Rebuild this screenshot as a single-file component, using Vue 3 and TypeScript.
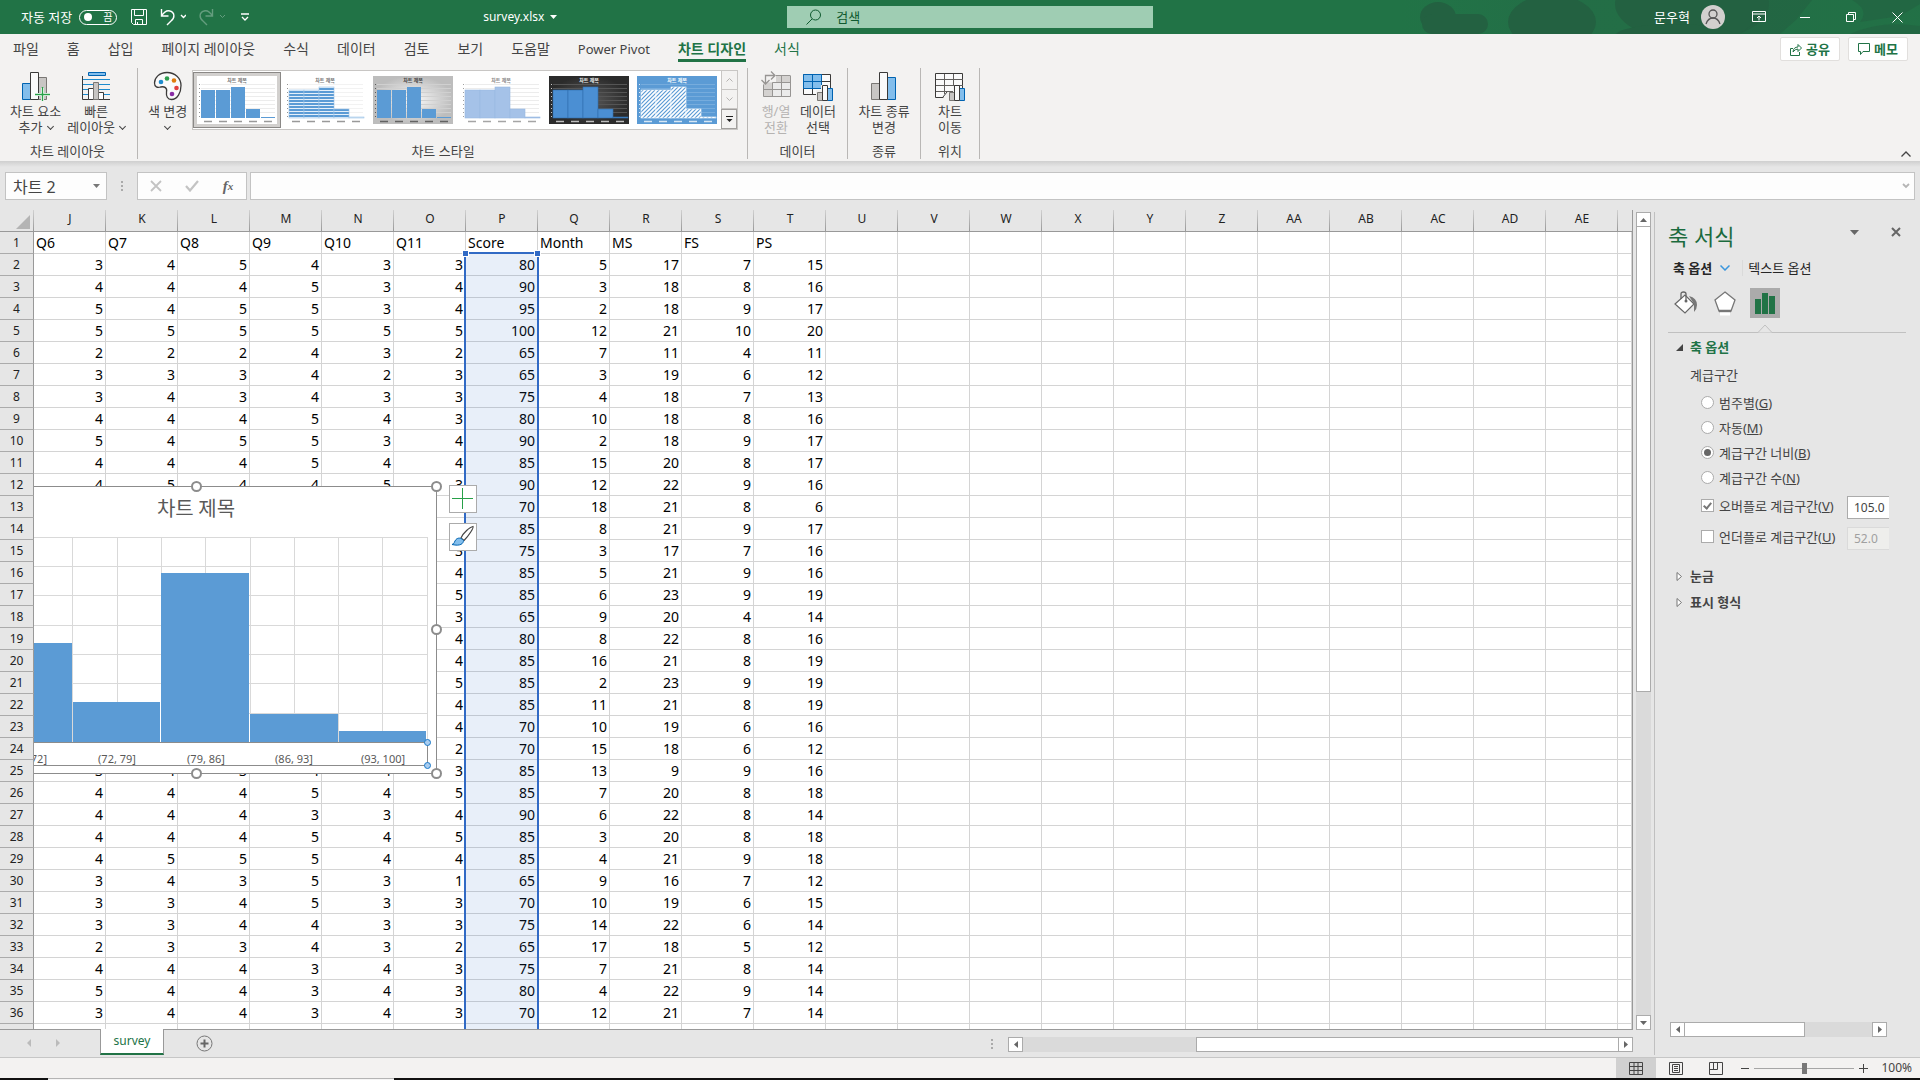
<script setup lang="ts">
import { ref } from 'vue'

interface Thumb {
  id: string
  back: string
  bar: string
  line: string
  ink: string
  grid: string
  joined: boolean
}

const menuTabs: string[] = ['파일', '홈', '삽입', '페이지 레이아웃', '수식', '데이터', '검토', '보기', '도움말', 'Power Pivot', '차트 디자인', '서식']
const activeTab = ref('차트 디자인')

const thumbs: Thumb[] = [
  { id: 'plain', back: '#ffffff', bar: '#5b9bd5', line: 'none', ink: '#777777', grid: '#ececec', joined: false },
  { id: 'stripe', back: '#ffffff', bar: 'url(#fill-stripe)', line: '#9cc3e6', ink: '#777777', grid: '#f2f2f2', joined: true },
  { id: 'silver', back: 'url(#back-silver)', bar: '#5b9bd5', line: 'none', ink: '#444444', grid: '#d0d0d0', joined: false },
  { id: 'pale', back: '#ffffff', bar: '#a5c2e8', line: '#98b8e2', ink: '#888888', grid: '#ececec', joined: true },
  { id: 'dark', back: 'url(#back-dark)', bar: '#4b8fd3', line: '#2f6fae', ink: '#eeeeee', grid: '#555555', joined: true },
  { id: 'hatch', back: '#5b9bd5', bar: 'url(#fill-hatch)', line: '#ffffff', ink: '#ffffff', grid: '#76acdd', joined: true },
]
const thumbTops: number[] = [14, 14, 11, 33, 41]

const columns: string[] = ['J', 'K', 'L', 'M', 'N', 'O', 'P', 'Q', 'R', 'S', 'T', 'U', 'V', 'W', 'X', 'Y', 'Z', 'AA', 'AB', 'AC', 'AD', 'AE']
const headings: string[] = ['Q6', 'Q7', 'Q8', 'Q9', 'Q10', 'Q11', 'Score', 'Month', 'MS', 'FS', 'PS']

const records: string[] = [
  '3 4 5 4 3 3 80 5 17 7 15',
  '4 4 4 5 3 4 90 3 18 8 16',
  '5 4 5 5 3 4 95 2 18 9 17',
  '5 5 5 5 5 5 100 12 21 10 20',
  '2 2 2 4 3 2 65 7 11 4 11',
  '3 3 3 4 2 3 65 3 19 6 12',
  '3 4 3 4 3 3 75 4 18 7 13',
  '4 4 4 5 4 3 80 10 18 8 16',
  '5 4 5 5 3 4 90 2 18 9 17',
  '4 4 4 5 4 4 85 15 20 8 17',
  '4 5 4 4 5 3 90 12 22 9 16',
  '- - - - - - 70 18 21 8 6',
  '- - - - - - 85 8 21 9 17',
  '- - - - - 3 75 3 17 7 16',
  '- - - - - 4 85 5 21 9 16',
  '- - - - - 5 85 6 23 9 19',
  '- - - - - 3 65 9 20 4 14',
  '- - - - - 4 80 8 22 8 16',
  '- - - - - 4 85 16 21 8 19',
  '- - - - - 5 85 2 23 9 19',
  '- - - - - 4 85 11 21 8 19',
  '- - - - - 4 70 10 19 6 16',
  '- - - - - 2 70 15 18 6 12',
  '3 4 3 4 4 3 85 13 9 9 16',
  '4 4 4 5 4 5 85 7 20 8 18',
  '4 4 4 3 3 4 90 6 22 8 14',
  '4 4 4 5 4 5 85 3 20 8 18',
  '4 5 5 5 4 4 85 4 21 9 18',
  '3 4 3 5 3 1 65 9 16 7 12',
  '3 3 4 5 3 3 70 10 19 6 15',
  '3 3 4 4 3 3 75 14 22 6 14',
  '2 3 3 4 3 2 65 17 18 5 12',
  '4 4 4 3 4 3 75 7 21 8 14',
  '5 4 4 3 4 3 80 4 22 9 14',
  '3 4 4 3 4 3 70 12 21 7 14',
]

const rows: string[][] = [
  headings,
  ...records.map((r) => r.split(' ').map((v) => (v === '-' ? '' : v))),
  [],
].map((r) => columns.map((_, i) => r[i] ?? ''))

const chartBars = [
  { x: 0, w: 72, top: 643 },
  { x: 73, w: 87, top: 702 },
  { x: 161, w: 88, top: 573 },
  { x: 250, w: 88, top: 714 },
  { x: 339, w: 87, top: 731 },
]
const chartCols = [72, 117, 161, 205, 250, 294, 338, 382, 427]
const chartLines = [537, 566, 595, 625, 654, 683, 713]
const chartLabels = [
  { x: 117, t: '(72, 79]' },
  { x: 206, t: '(79, 86]' },
  { x: 294, t: '(86, 93]' },
  { x: 383, t: '(93, 100]' },
]
const chartHandles = [[196, 486], [436, 486], [436, 629], [436, 773], [196, 773]]

const binModes = [
  { id: 'category', text: '범주별', key: 'G' },
  { id: 'auto', text: '자동', key: 'M' },
  { id: 'width', text: '계급구간 너비', key: 'B' },
  { id: 'count', text: '계급구간 수', key: 'N' },
]
const binMode = ref('width')
const overflowOn = ref(true)
const underflowOn = ref(false)
const overflowBin = ref('105.0')
const underflowBin = ref('52.0')
const cellName = ref('차트 2')
const formula = ref('')
const query = ref('')
</script>

<template>
  <div class="app">
    <header class="titlebar">
      <svg class="pattern" width="520" height="34" viewBox="0 0 520 34" aria-hidden="true">
        <defs><linearGradient id="haze"><stop offset="0" stop-color="#24704a" stop-opacity="0" /><stop offset=".3" stop-color="#246b46" stop-opacity=".7" /><stop offset="1" stop-color="#246b46" stop-opacity=".3" /></linearGradient></defs>
        <rect x="0" width="520" height="34" fill="url(#haze)" />
        <g fill="#236141">
          <ellipse cx="38" cy="17" rx="18" ry="15" />
          <rect x="22" y="14" width="66" height="20" rx="10" />
          <ellipse cx="152" cy="22" rx="44" ry="27" />
          <ellipse cx="292" cy="4" rx="77" ry="38" />
          <ellipse cx="275" cy="36" rx="60" ry="12" />
          <path d="M366 0H412L396 20L380 34H340L366 14ZM450 34Q480 20 520 26V34ZM452 0Q470 10 460 22L500 16L520 4V0Z" opacity=".6" />
        </g>
      </svg>
      <div class="title-left">
        <label class="autosave">자동 저장
          <button class="toggle" type="button" aria-label="자동 저장"><i></i>끔</button>
        </label>
        <button class="tool save" type="button" aria-label="저장">
          <svg width="16" height="16" viewBox="0 0 16 16"><path d="M.5.5h15v15h-13l-2-2zM3.5.5v6h9v-6M4.500 15.500v-5h7v5M6.500 13v2.500" /></svg>
        </button>
        <button class="tool undo" type="button" aria-label="실행 취소">
          <svg width="26" height="18" viewBox="0 0 26 18"><path d="M1.500 1v7h7M1.500 8C4 4 7 2 10 3c5 1.500 5 7 1 10l-4 4" stroke-width="1.400" /><path d="M21 7l2.500 2.500L26 7" stroke-width="1.400" /></svg>
        </button>
        <button class="tool redo" type="button" aria-label="다시 실행">
          <svg width="28" height="18" viewBox="0 0 28 18"><path d="M13.500 1v7h-7M13.500 8C11 4 8 2 5 3c-5 1.500-5 7-1 10l4 4" stroke-width="1.400" /><path d="M21 7l2.500 2.500L26 7" /></svg>
        </button>
        <button class="tool custom" type="button" aria-label="사용자 지정">
          <svg width="8" height="8" viewBox="0 0 8 8"><path d="M0 1h8M1 4l3 3 3-3" stroke-width="1.300" /></svg>
        </button>
        <button class="filename" type="button">survey.xlsx<svg width="7" height="4" viewBox="0 0 7 4"><path d="M0 0h7L3.500 4z" fill="#fff" stroke="none" /></svg></button>
      </div>
      <label class="search">
        <svg width="16" height="16" viewBox="0 0 16 16"><circle cx="9.500" cy="6" r="5" /><path d="M6 10L.5 15.500" /></svg>
        <input v-model="query" type="text" placeholder="검색" aria-label="검색" />
      </label>
      <div class="title-right">
        <span class="user">문우혁</span>
        <svg class="avatar" width="24" height="24" viewBox="0 0 24 24"><circle cx="12" cy="12" r="12" fill="#d2d0ce" /><circle cx="12" cy="9" r="4" fill="none" stroke="#555" stroke-width="1.300" /><path d="M5 19q2-6 7-6t7 6" fill="none" stroke="#555" stroke-width="1.300" /></svg>
        <button class="win" type="button" aria-label="리본 표시 옵션"><svg width="14" height="12" viewBox="0 0 14 12"><path d="M.5.5h13v10H.5zM.5 3h13M7 9.500V5M5 7l2-2 2 2" /></svg></button>
        <button class="win" type="button" aria-label="최소화"><svg width="10" height="12" viewBox="0 0 10 12"><path d="M0 6.500h10" /></svg></button>
        <button class="win" type="button" aria-label="이전 크기로"><svg width="10" height="10" viewBox="0 0 10 10"><path d="M.5 2.500h7v7h-7zM2.500 2.500v-2h7v7h-2" /></svg></button>
        <button class="win" type="button" aria-label="닫기"><svg width="11" height="11" viewBox="0 0 11 11"><path d="M.5.5l10 10M10.500.5l-10 10" /></svg></button>
      </div>
    </header>

    <section class="ribbon">
      <div class="tabrow">
        <nav class="tabs">
          <button v-for="t in menuTabs" :key="t" type="button" :class="{ latin: t === 'Power Pivot', active: t === activeTab, context: t === '서식' }" @click="activeTab = t">{{ t }}</button>
        </nav>
        <button class="share" type="button"><svg width="12" height="13" viewBox="0 0 12 13"><path d="M3 5.500H.5v7h9V9M3 9q.5-5 5-5V1.500L11.500 5 8 8.500V6Q5 6 3 9z" /></svg>공유</button>
        <button class="share" type="button"><svg width="12" height="12" viewBox="0 0 12 12"><path d="M.5.5h11v8H5l-2.500 3v-3h-2z" /></svg>메모</button>
      </div>

      <div class="groups">
        <div class="group g-layout">
          <div class="items">
            <button class="item" type="button">
              <svg width="30" height="30" viewBox="0 0 30 30"><path d="M1.500 12.500h8v16h-8z" fill="#83beec" stroke="#0063b1" /><path d="M17.500 6.500h8v22h-8z" fill="#c8c6c4" stroke="#797774" /><path d="M9.500 1.500h8v27h-8z" fill="#fafafa" stroke="#3b3a39" /><path d="M21.500 17v13M15 23.500h14" stroke="#fff" stroke-width="3" /><path d="M21.500 16v14M14 23.500h15" stroke="#27a048" stroke-width="1.400" /></svg>
              <span>차트 요소</span><span>추가 <b class="chev"></b></span>
            </button>
            <button class="item" type="button">
              <svg width="30" height="30" viewBox="0 0 30 30"><path d="M7.500 1.500h17v3h-17z" fill="#83beec" stroke="#0063b1" /><path d="M2 8.500h27M2 13.500h27M2 18.500h27M2 23.500h27" stroke="#1e8bcd" /><path d="M1.500 5v23.500H29" fill="none" stroke="#3b3a39" /><path d="M7.500 17.500h5v11h-5zM17.500 21.500h5v7h-5z" fill="#fff" stroke="#3b3a39" /><path d="M12.500 11.500h5v17h-5z" fill="#c8c6c4" stroke="#797774" /></svg>
              <span>빠른</span><span>레이아웃 <b class="chev"></b></span>
            </button>
          </div>
          <h3>차트 레이아웃</h3>
        </div>

        <div class="group g-style">
          <div class="items">
            <button class="item" type="button">
              <svg width="30" height="30" viewBox="0 0 30 30"><path d="M14 1.500C6 1.500 1.500 7 1.500 12c0 4 3 5 6 4 4-1 7 1 6 5-.5 4 1 7.500 5 7.500 6 0 9.500-7 9.500-14C28 7 22 1.500 14 1.500z" fill="#fafafa" stroke="#3b3a39" stroke-width="1.300" /><circle cx="8" cy="11" r="2.300" fill="#1e8bcd" /><circle cx="14" cy="7.500" r="2.300" fill="#2e9e4f" /><circle cx="21" cy="9.500" r="2.300" fill="#e07b0c" /><circle cx="23.500" cy="17" r="2.300" fill="#e23e3e" /><circle cx="19" cy="23" r="2.300" fill="#8a2da5" /></svg>
              <span>색 변경</span><span><b class="chev"></b></span>
            </button>
            <div class="gallery">
              <button v-for="t in thumbs" :key="t.id" type="button" class="thumb" :class="{ chosen: t.id === 'plain' }" :aria-label="'차트 스타일 ' + t.id">
                <svg width="80" height="48" viewBox="0 0 80 48">
                  <defs>
                    <pattern v-if="t.id === 'stripe'" id="fill-stripe" width="4" height="3" patternUnits="userSpaceOnUse"><rect width="4" height="3" fill="#e6f0fa" /><rect width="4" height="2" fill="#5b9bd5" /></pattern>
                    <pattern v-if="t.id === 'hatch'" id="fill-hatch" width="4" height="4" patternUnits="userSpaceOnUse"><rect width="4" height="4" fill="#fff" /><path d="M-1 5L5-1M-1 1L1-1M3 5L5 3" stroke="#5b9bd5" stroke-width="1.200" /></pattern>
                    <radialGradient v-if="t.id === 'silver'" id="back-silver"><stop offset="0" stop-color="#fafafa" /><stop offset="1" stop-color="#bdbdbd" /></radialGradient>
                    <radialGradient v-if="t.id === 'dark'" id="back-dark"><stop offset="0" stop-color="#5a5a5a" /><stop offset="1" stop-color="#2b2b2b" /></radialGradient>
                  </defs>
                  <rect width="80" height="48" :fill="t.back" />
                  <path v-for="y in [8, 12, 16, 20, 24, 28, 32, 36]" :key="y" :d="`M4 ${y}.5H78`" :stroke="t.grid" />
                  <path d="M2.500 8V42" :stroke="t.ink" stroke-dasharray="1 3" opacity=".8" />
                  <rect v-for="(y, i) in thumbTops" :key="i" :x="4 + i * 15" :y="y" :width="t.joined ? 15 : 14" :height="42 - y" :fill="t.bar" :stroke="t.line" stroke-width=".6" />
                  <path d="M7 45.500H78" :stroke="t.ink" stroke-width="1.500" stroke-dasharray="8 7" opacity=".75" />
                  <text x="40" y="6" text-anchor="middle" :fill="t.ink" font-size="5" font-weight="700">차트 제목</text>
                </svg>
              </button>
              <div class="gallery-scroll">
                <button type="button" aria-label="위로"><svg width="7" height="4" viewBox="0 0 7 4"><path d="M.5 3.500l3-3 3 3" stroke="#b5b3b1" fill="none" /></svg></button>
                <button type="button" aria-label="아래로"><svg width="7" height="4" viewBox="0 0 7 4"><path d="M.5.5l3 3 3-3" stroke="#b5b3b1" fill="none" /></svg></button>
                <button type="button" class="more" aria-label="자세히"><svg width="7" height="7" viewBox="0 0 7 7"><path d="M0 .5h7" stroke="#222" /><path d="M.5 3h6l-3 3z" fill="#222" /></svg></button>
              </div>
            </div>
          </div>
          <h3>차트 스타일</h3>
        </div>

        <div class="group g-data">
          <div class="items">
            <button class="item" type="button" disabled>
              <svg width="30" height="30" viewBox="0 0 30 30"><path d="M2.500 4.500h27v21h-27z" fill="#ebebeb" /><path d="M2.500 11.500h9v14h-9zM11.500 4.500h18v7h-18z" fill="#d4d2d0" /><path d="M29.500 4.500v21h-27v-12M20.500 4.500v21M11.500 11.500v14M11.500 11.500h18M2.500 18.500h27M15 4.500h14" fill="none" stroke="#979593" /><path d="M0 0h15v11H0z" fill="#f3f2f1" /><path d="M4.500 13V4.500H14M10 .5l4 4-4 4M.5 9l4 4 4-4" fill="none" stroke="#979593" stroke-width="1.300" /></svg>
              <span>행/열</span><span>전환</span>
            </button>
            <button class="item" type="button">
              <svg width="30" height="30" viewBox="0 0 30 30"><path d="M.5 3.500h27v20H.5z" fill="#fafafa" stroke="#3b3a39" /><path d="M.5 3.500h18v14H.5z" fill="#83beec" stroke="#0063b1" /><path d="M9.500 4v13M1 10.500h18" stroke="#0063b1" /><path d="M9.500 18v6M18.500 10.500h9M19 17.500h9" stroke="#3b3a39" /><path d="M13 19h5v-5h6v4h5v12H13z" fill="#f3f2f1" /><path d="M14.500 21.500h5v8h-5z" fill="#c8c6c4" stroke="#797774" /><path d="M24.500 17.500h5v12h-5z" fill="#83beec" stroke="#0063b1" /><path d="M19.500 14.500h5v15h-5z" fill="#fafafa" stroke="#3b3a39" /></svg>
              <span>데이터</span><span>선택</span>
            </button>
          </div>
          <h3>데이터</h3>
        </div>

        <div class="group g-type">
          <div class="items">
            <button class="item" type="button">
              <svg width="30" height="30" viewBox="0 0 30 30"><path d="M2.500 12.500h8v16h-8z" fill="#c8c6c4" stroke="#797774" /><path d="M18.500 6.500h8v22h-8z" fill="#83beec" stroke="#0063b1" /><path d="M10.500 1.500h8v27h-8z" fill="#fafafa" stroke="#3b3a39" /></svg>
              <span>차트 종류</span><span>변경</span>
            </button>
          </div>
          <h3>종류</h3>
        </div>

        <div class="group g-place">
          <div class="items">
            <button class="item" type="button">
              <svg width="30" height="30" viewBox="0 0 30 30"><path d="M.5 2.500h27v18l-14 6H.5z" fill="#fafafa" stroke="#3b3a39" /><path d="M9.500 3v20M18.500 3v15M1 8.500h27M1 14.500h27M1 20.500h20" stroke="#605e5c" /><path d="M8 27l5-6h5v-6h6v3h6v12H12z" fill="#f3f2f1" /><path d="M8 26l4-5" stroke="#3b3a39" /><path d="M14.500 21.500h5v8h-5z" fill="#c8c6c4" stroke="#797774" /><path d="M24.500 17.500h5v12h-5z" fill="#83beec" stroke="#0063b1" /><path d="M19.500 14.500h5v15h-5z" fill="#fafafa" stroke="#3b3a39" /></svg>
              <span>차트</span><span>이동</span>
            </button>
          </div>
          <h3>위치</h3>
        </div>
        <button class="collapse" type="button" aria-label="리본 축소"><svg width="10" height="6" viewBox="0 0 10 6"><path d="M.5 5.500l4.500-4.500 4.500 4.500" fill="none" stroke="#444" stroke-width="1.300" /></svg></button>
      </div>
    </section>

    <section class="formula-bar">
      <div class="namebox">
        <input v-model="cellName" type="text" aria-label="이름 상자" />
        <button type="button" aria-label="이름 목록"><svg width="7" height="4" viewBox="0 0 7 4"><path d="M0 0h7L3.500 4z" fill="#777" /></svg></button>
      </div>
      <i class="dots"></i>
      <div class="fx">
        <button type="button" aria-label="취소"><svg width="12" height="12" viewBox="0 0 12 12"><path d="M1 1l10 10M11 1L1 11" stroke="#c3c3c3" stroke-width="1.800" /></svg></button>
        <button type="button" aria-label="입력"><svg width="14" height="12" viewBox="0 0 14 12"><path d="M1 6l4 4.500L13 1" fill="none" stroke="#c3c3c3" stroke-width="2.200" /></svg></button>
        <button type="button" class="fn" aria-label="함수 삽입">f<sub>x</sub></button>
      </div>
      <div class="formula">
        <input v-model="formula" type="text" aria-label="수식 입력줄" />
        <svg width="8" height="6" viewBox="0 0 8 6"><path d="M1 1l3 3 3-3" fill="none" stroke="#b5b5b5" stroke-width="1.800" /></svg>
      </div>
    </section>

    <main class="work">
      <div class="sheet-side">
        <div class="sheet-row">
          <div class="sheet">
            <table>
              <colgroup><col class="c-head" /><col v-for="c in columns" :key="c" class="c-data" /><col /></colgroup>
              <thead>
                <tr><th class="corner"><svg width="14" height="14" viewBox="0 0 14 14"><path d="M14 0v14H0z" fill="#b4b4b4" /></svg></th><th v-for="c in columns" :key="c">{{ c }}</th><th class="rest"></th></tr>
              </thead>
              <tbody>
                <tr v-for="(r, i) in rows" :key="i" :class="{ names: i === 0 }">
                  <th>{{ i < 36 ? i + 1 : '' }}</th>
                  <td v-for="(v, j) in r" :key="j">{{ v }}</td>
                  <td></td>
                </tr>
              </tbody>
            </table>
            <div class="range"><i></i><i></i></div>
            <div class="chart">
              <svg width="412" height="300" viewBox="34 480 412 300">
                <rect x="20" y="486.500" width="416.500" height="287" fill="#fff" stroke="#8c8c8c" />
                <g stroke="#d9d9d9">
                  <path v-for="x in chartCols" :key="x" :d="`M${x}.5 537V742`" />
                  <path v-for="y in chartLines" :key="y" :d="`M34 ${y}.5H428`" />
                </g>
                <g fill="#5b9bd5"><rect v-for="b in chartBars" :key="b.x" :x="b.x" :y="b.top" :width="b.w" :height="742 - b.top" /></g>
                <path d="M160.500 702v40M249.500 714v28" stroke="#fff" />
                <path d="M34 742.500H427.500V765.500H34" fill="none" stroke="#8c8c8c" />
                <text x="196" y="516" text-anchor="middle" class="chart-title">차트 제목</text>
                <text x="47" y="763" text-anchor="end" class="axis">72]</text>
                <text v-for="l in chartLabels" :key="l.x" :x="l.x" y="763" text-anchor="middle" class="axis">{{ l.t }}</text>
                <g fill="#fff" stroke="#8c8c8c" stroke-width="2"><circle v-for="(h, i) in chartHandles" :key="i" :cx="h[0] + 0.5" :cy="h[1] + 0.5" r="4.500" /></g>
                <g fill="#a9cdf0" stroke="#1a78c8"><circle cx="427.500" cy="742.500" r="3" /><circle cx="427.500" cy="765.500" r="3" /></g>
              </svg>
              <div class="chart-tools">
                <button type="button" aria-label="차트 요소"><svg width="22" height="22" viewBox="0 0 22 22"><path d="M10.500 0v21M0 10.500h21" stroke="#27a048" /></svg></button>
                <button type="button" aria-label="차트 스타일"><svg width="24" height="24" viewBox="0 0 24 24"><path d="M10 13C12 8 19 2 22 1.500c1 1-4 9-9 14z" fill="#fff" stroke="#444" stroke-width="1.200" /><path d="M12.500 15.500c0 3-3 6-11.500 4 3-1 2-3 4-5s5-2 7.500 1z" fill="#83beec" stroke="#0063b1" /></svg></button>
              </div>
            </div>
          </div>
          <div class="vscroll">
            <button type="button" aria-label="위로 스크롤"><svg width="7" height="4" viewBox="0 0 7 4"><path d="M0 4h7L3.500 0z" /></svg></button>
            <div class="vtrack"><i></i></div>
            <button type="button" aria-label="아래로 스크롤"><svg width="7" height="4" viewBox="0 0 7 4"><path d="M0 0h7L3.500 4z" /></svg></button>
          </div>
        </div>
        <div class="sheet-tabs">
          <div class="nav-arrows">
            <svg width="4" height="8" viewBox="0 0 4 8"><path d="M4 0v8L0 4z" fill="#bbb" /></svg>
            <svg width="4" height="8" viewBox="0 0 4 8"><path d="M0 0v8l4-4z" fill="#bbb" /></svg>
          </div>
          <button class="sheet-tab" type="button">survey</button>
          <button class="add-sheet" type="button" aria-label="새 시트"><svg width="17" height="17" viewBox="0 0 17 17"><circle cx="8.500" cy="8.500" r="7.500" fill="none" stroke="#777" /><path d="M8.500 4.500v8M4.500 8.500h8" stroke="#666" stroke-width="2" /></svg></button>
          <i class="dots small"></i>
          <div class="hscroll">
            <button type="button" aria-label="왼쪽"><svg width="4" height="7" viewBox="0 0 4 7"><path d="M4 0v7L0 3.500z" /></svg></button>
            <div class="htrack"><i></i></div>
            <button type="button" aria-label="오른쪽"><svg width="4" height="7" viewBox="0 0 4 7"><path d="M0 0v7l4-3.500z" /></svg></button>
          </div>
        </div>
      </div>

      <aside class="pane">
        <div class="pane-head">
          <h2>축 서식</h2>
          <button type="button" aria-label="작업창 옵션"><svg width="9" height="5" viewBox="0 0 9 5"><path d="M0 0h9L4.500 5z" fill="#666" /></svg></button>
          <button type="button" aria-label="닫기"><svg width="10" height="10" viewBox="0 0 10 10"><path d="M1 1l8 8M9 1L1 9" stroke="#666" stroke-width="2" /></svg></button>
        </div>
        <div class="pane-tabs">
          <button type="button" class="on">축 옵션<svg width="10" height="6" viewBox="0 0 10 6"><path d="M.5.5L5 5 9.500.5" fill="none" stroke="#3a96dd" stroke-width="1.500" /></svg></button>
          <button type="button" class="other">텍스트 옵션</button>
        </div>
        <div class="pane-icons">
          <button type="button" aria-label="채우기 및 선"><svg width="24" height="24" viewBox="0 0 24 24"><path d="M1 13L11 4l9 9-9 9z" fill="#fff" stroke="#666" stroke-width="1.200" /><path d="M7 8V3q0-2 2.500-2T12 3v7" fill="none" stroke="#666" stroke-width="1.300" /><circle cx="12" cy="10" r="1.500" fill="#666" /><path d="M15 5q8 2 8 9 0 4-3 7 0-6 0-8z" fill="#777" /></svg></button>
          <button type="button" aria-label="효과"><svg width="24" height="26" viewBox="0 0 24 26"><path d="M12 2l10 8-4 11H6L2 10z" fill="#fff" stroke="#777" stroke-width="1.300" /><path d="M6 21h12" stroke="#777" stroke-width="2.500" /><path d="M7 24h10" stroke="#fff" stroke-width="3" /></svg></button>
          <button type="button" class="picked" aria-label="축 옵션"><svg width="20" height="21" viewBox="0 0 20 21"><path d="M0 6h6v15H0zM7 0h6v21H7zM14 3h6v18h-6z" fill="#217346" /></svg></button>
        </div>
        <div class="rule"><svg width="14" height="9" viewBox="0 0 14 9"><path d="M0 8.500L7 1l7 7.500" fill="#e6e6e6" stroke="#c0c0c0" /></svg></div>
        <h4 class="section open"><svg width="7" height="7" viewBox="0 0 7 7"><path d="M7 0v7H0z" fill="#444" /></svg>축 옵션</h4>
        <p class="sub">계급구간</p>
        <div class="modes">
          <label v-for="m in binModes" :key="m.id" class="opt"><input v-model="binMode" type="radio" name="bin" :value="m.id" /><span>{{ m.text }}(<u>{{ m.key }}</u>)</span></label>
        </div>
        <div class="bin-row">
          <label class="opt"><input v-model="overflowOn" type="checkbox" /><span>오버플로 계급구간(<u>V</u>)</span></label>
          <input v-model="overflowBin" class="num" type="text" aria-label="오버플로 값" />
        </div>
        <div class="bin-row">
          <label class="opt"><input v-model="underflowOn" type="checkbox" /><span>언더플로 계급구간(<u>U</u>)</span></label>
          <input v-model="underflowBin" class="num" type="text" :disabled="!underflowOn" aria-label="언더플로 값" />
        </div>
        <h4 class="section first"><svg width="6" height="9" viewBox="0 0 6 9"><path d="M.5.5v8l4.500-4z" fill="#fff" stroke="#777" /></svg>눈금</h4>
        <h4 class="section"><svg width="6" height="9" viewBox="0 0 6 9"><path d="M.5.5v8l4.500-4z" fill="#fff" stroke="#777" /></svg>표시 형식</h4>
        <div class="hscroll pane-scroll">
          <button type="button" aria-label="왼쪽"><svg width="4" height="7" viewBox="0 0 4 7"><path d="M4 0v7L0 3.500z" /></svg></button>
          <div class="htrack"><i></i></div>
          <button type="button" aria-label="오른쪽"><svg width="4" height="7" viewBox="0 0 4 7"><path d="M0 0v7l4-3.500z" /></svg></button>
        </div>
      </aside>
    </main>

    <footer class="status">
      <button type="button" class="view on" aria-label="기본"><svg width="14" height="13" viewBox="0 0 14 13"><path d="M.5.5h13v12H.5zM5 .5v12M9 .5v12M.5 4.500h13M.5 8.500h13" /></svg></button>
      <button type="button" class="view" aria-label="페이지 레이아웃"><svg width="14" height="13" viewBox="0 0 14 13"><path d="M.5.5h13v12H.5zM3.500 2.500h7v8h-7zM5 4.500h4M5 6.500h4M5 8.500h4" /></svg></button>
      <button type="button" class="view" aria-label="페이지 나누기 미리 보기"><svg width="14" height="13" viewBox="0 0 14 13"><path d="M.5.5h13v12H.5zM.5 7.500h8V.5M4.500.5v7" /></svg></button>
      <button type="button" class="zoom-btn" aria-label="축소"><svg width="8" height="8" viewBox="0 0 8 8"><path d="M0 4.500h8" /></svg></button>
      <input class="zoom" type="range" min="10" max="190" value="100" aria-label="확대/축소" />
      <button type="button" class="zoom-btn" aria-label="확대"><svg width="9" height="9" viewBox="0 0 9 9"><path d="M0 4.500h9M4.500 0v9" /></svg></button>
      <span class="percent">100%</span>
    </footer>
    <div class="edge"><i></i></div>
  </div>
</template>

<style>
body {
  margin: 0;
  overflow: hidden;
}
</style>

<style scoped>
.app {
  display: flex;
  flex-direction: column;
  height: 100vh;
  background: #e6e6e6;
  color: #444;
  font: 13px/16px 'Noto Sans', 'Noto Sans CJK KR', sans-serif;
}
.app *, .app *::before {
  box-sizing: border-box;
}
button, input {
  margin: 0;
  padding: 0;
  border: 0;
  background: none;
  color: inherit;
  font: inherit;
  min-width: 0;
  border-radius: 0;
  outline: none;
}
button {
  display: flex;
  align-items: center;
  justify-content: center;
  white-space: nowrap;
}
svg {
  display: block;
  flex: none;
}

.titlebar {
  position: relative;
  display: grid;
  grid-template-columns: 1.027fr 366px 1fr;
  align-items: center;
  height: 34px;
  flex: none;
  background: #217346;
  color: #fff;
}
.titlebar svg {
  fill: none;
  stroke: #fff;
}
.titlebar .pattern {
  position: absolute;
  right: 0;
  top: 0;
  stroke: none;
}
.titlebar .avatar {
  margin: 0 11px;
  stroke: none;
}
.title-left, .title-right {
  position: relative;
  display: flex;
  align-items: center;
  height: 34px;
  min-width: 0;
}
.title-left {
  padding-left: 21px;
}
.autosave {
  display: flex;
  align-items: center;
  gap: 7px;
  width: 97px;
  white-space: nowrap;
}
.toggle {
  width: 38px;
  height: 15px;
  border: 1px solid #fff;
  border-radius: 8px;
  font-size: 10px;
  gap: 11px;
}
.toggle i {
  width: 8px;
  height: 8px;
  border-radius: 50%;
  background: #fff;
}
.tool {
  margin-left: 13px;
}
.tool.redo {
  opacity: .3;
}
.tool.custom {
  margin-left: 14px;
}
.filename {
  gap: 6px;
  margin-left: auto;
  margin-right: 230px;
  font-size: 12px;
}
.search {
  position: relative;
  display: flex;
  align-items: center;
  gap: 14px;
  height: 22px;
  padding-left: 19px;
  background: #9fcdb3;
}
.search svg {
  stroke: #0f5a2f;
}
.search input {
  flex: 1;
}
.search input::placeholder {
  color: #0f5a2f;
  opacity: 1;
}
.title-right {
  justify-content: flex-end;
}
.win {
  width: 46px;
  height: 34px;
}

.ribbon {
  flex: none;
  height: 127px;
  background: #f3f2f1;
}
.tabrow {
  display: flex;
  align-items: flex-start;
  gap: 8px;
  height: 32px;
  padding: 3px 12px 0 13px;
}
.tabs {
  display: flex;
  flex: 1;
  gap: 28px;
  font-size: 14px;
}
.tabs button {
  height: 25px;
  padding-top: 2px;
  border-bottom: 3px solid transparent;
}
.tabs .latin {
  font-size: 13px;
}
.tabs .active {
  color: #217346;
  font-weight: 700;
  border-color: #217346;
}
.tabs .context {
  color: #217346;
}
.share {
  gap: 4px;
  width: 60px;
  height: 24px;
  border: 1px solid #e1dfdd;
  border-radius: 2px;
  background: #fff;
  color: #217346;
  font-weight: 700;
}
.share svg {
  fill: none;
  stroke: #217346;
}
.groups {
  display: flex;
  padding-top: 2px;
  height: 95px;
}
.group {
  display: flex;
  flex-direction: column;
  justify-content: space-between;
  height: 91px;
  border-right: 1px solid #b9b7b5;
}
.items {
  display: flex;
  justify-content: center;
}
.item {
  flex-direction: column;
  margin-top: 3px;
}
.item svg {
  margin-bottom: 2px;
}
.item span {
  display: flex;
  align-items: center;
  justify-content: center;
  gap: 5px;
  height: 16px;
}
.item:disabled {
  color: #b5b3b1;
}
.chev {
  width: 5px;
  height: 5px;
  border-right: 1px solid #444;
  border-bottom: 1px solid #444;
  transform: rotate(45deg);
  margin-bottom: 2px;
}
.group h3 {
  margin: 0;
  font: inherit;
  line-height: 16px;
  text-align: center;
}
.g-layout {
  width: 138px;
  padding-right: 2px;
}
.g-layout .items {
  gap: 6px;
}
.g-style {
  width: 610px;
  padding: 0 9px 0 10px;
}
.g-style .items {
  justify-content: space-between;
}
.g-data {
  width: 100px;
}
.g-data .items {
  gap: 9px;
  padding-left: 2px;
}
.g-type {
  width: 73px;
}
.g-place {
  width: 59px;
}
.gallery {
  display: flex;
  width: 546px;
  height: 60px;
  margin-top: 2px;
  border: 1px solid #c8c6c4;
  background: #fff;
}
.thumb {
  width: 88px;
  height: 56px;
  margin-top: 1px;
}
.thumb.chosen {
  border: 1px solid #8a8886;
  background: #d2d0ce;
}
.gallery-scroll {
  display: flex;
  flex-direction: column;
  flex: 1;
  background: #f3f2f1;
}
.gallery-scroll button {
  flex: 1;
  border-left: 1px solid #c8c6c4;
  border-bottom: 1px solid #c8c6c4;
}
.gallery-scroll .more {
  border: 1px solid #a19f9d;
}
.collapse {
  align-self: flex-end;
  margin: 0 9px 4px auto;
}

.formula-bar {
  display: flex;
  flex: none;
  height: 49px;
  padding: 11px 5px 10px;
  background: linear-gradient(#cfcfcf, #e6e6e6 6px);
}
.namebox, .fx, .formula {
  display: flex;
  align-items: center;
  height: 28px;
  border: 1px solid #c3c3c3;
  background: #fdfdfd;
}
.namebox {
  width: 102px;
  padding: 0 6px 0 7px;
}
.namebox input {
  flex: 1;
  font-size: 16px;
}
.dots {
  width: 2px;
  height: 10px;
  margin: 9px 14px;
  background: repeating-linear-gradient(#aaa 0 2px, transparent 2px 4px);
}
.fx {
  width: 110px;
  margin-right: 3px;
}
.fx button {
  width: 36px;
}
.fx .fn {
  color: #666;
  font: italic 700 15px/16px 'Liberation Serif', serif;
}
.fn sub {
  font-size: 11px;
  line-height: 8px;
}
.formula {
  flex: 1;
  padding-right: 4px;
}
.formula input {
  flex: 1;
}

.work {
  display: flex;
  flex: 1;
  min-height: 0;
}
.sheet-side {
  display: flex;
  flex-direction: column;
  flex: 1;
  min-width: 0;
}
.sheet-row {
  display: flex;
  flex: 1;
  min-height: 0;
}
.sheet {
  position: relative;
  flex: 1;
  min-width: 0;
  overflow: hidden;
  border-right: 1px solid #999;
  border-bottom: 1px solid #999;
  background: #fff;
}
table {
  width: 100%;
  table-layout: fixed;
  border-spacing: 0;
}
.c-head {
  width: 34px;
}
.c-data {
  width: 72px;
}
th {
  height: 22px;
  padding: 0;
  background: #e6e6e6;
  color: #222;
  font-size: 12px;
  font-weight: 400;
  line-height: 16px;
  border-bottom: 1px solid #ababab;
  border-right: 1px solid #999;
}
thead th {
  padding-bottom: 4px;
  border-bottom-color: #999;
  border-right: 0;
  background: linear-gradient(#d0d0d0, #999) right / 1px 100% no-repeat #e6e6e6;
}
thead .rest {
  background: #e6e6e6;
}
thead .corner {
  padding: 3px 0 0;
}
.corner svg {
  margin-left: 16px;
}
td {
  height: 22px;
  padding: 0 2px;
  border-right: 1px solid #d4d4d4;
  border-bottom: 1px solid #d4d4d4;
  color: #000;
  font-size: 14px;
  line-height: 18px;
  text-align: right;
  white-space: nowrap;
}
.names td {
  text-align: left;
}
.range {
  position: absolute;
  left: 464px;
  top: 42px;
  bottom: -4px;
  width: 75px;
  border: 2px solid #316ac5;
  background: rgba(49, 106, 197, .11);
}
.range i {
  position: absolute;
  top: -3px;
  left: -3px;
  width: 5px;
  height: 5px;
  background: #316ac5;
  outline: 1px solid #fff;
}
.range i + i {
  left: auto;
  right: -3px;
}
.chart {
  position: absolute;
  left: 34px;
  top: 270px;
}
.chart-title {
  font-size: 20px;
  fill: #595959;
  font-family: 'Noto Sans CJK KR', sans-serif;
}
.axis {
  font-size: 11px;
  fill: #595959;
}
.chart-tools {
  position: absolute;
  left: 415px;
  top: 5px;
  display: flex;
  flex-direction: column;
  gap: 10px;
}
.chart-tools button {
  width: 28px;
  height: 28px;
  border: 1px solid #ababab;
  background: #fff;
}
.vscroll {
  display: flex;
  flex-direction: column;
  width: 21px;
  padding: 2px 3px 0;
}
.vscroll button, .hscroll button {
  flex: none;
  width: 15px;
  height: 15px;
  border: 1px solid #ababab;
  background: #fff;
}
.vscroll path, .hscroll path {
  fill: #666;
}
.vtrack {
  flex: 1;
  width: 15px;
  background: #dadada;
}
.vtrack i {
  display: block;
  height: 59%;
  border: 1px solid #ababab;
  border-top: 0;
  background: #fff;
}
.sheet-tabs {
  display: flex;
  flex: none;
  align-items: flex-start;
  height: 27px;
}
.nav-arrows {
  display: flex;
  gap: 25px;
  width: 100px;
  padding: 9px 0 0 27px;
}
.sheet-tab {
  position: relative;
  width: 64px;
  height: 26px;
  margin-top: -1px;
  border: solid #999;
  border-width: 0 1px;
  border-bottom: 2px solid #217346;
  background: #fff;
  color: #217346;
  font-size: 12px;
}
.add-sheet {
  margin: 5px 0 0 32px;
}
.dots.small {
  margin: 9px 15px 0 auto;
}
.hscroll {
  display: flex;
  flex: none;
  width: calc(38% - 4px);
  margin: 7px 21px 0 0;
}
.htrack {
  display: flex;
  flex: 1;
  justify-content: flex-end;
  height: 15px;
  background: #dadada;
}
.htrack i {
  width: 71%;
  border: solid #ababab;
  border-width: 1px 0 1px 1px;
  background: #fff;
}

.pane {
  display: flex;
  flex-direction: column;
  flex: none;
  width: 266px;
  margin: 2px 0;
  padding: 0 13px;
  border-left: 1px solid #c0c0c0;
}
.pane-head {
  display: flex;
  align-items: flex-start;
  padding: 8px 6px 0 0;
  height: 48px;
}
.pane-head h2 {
  flex: 1;
  margin: 0;
  color: #1b6b3e;
  font-size: 22px;
  font-weight: 400;
  line-height: 32px;
}
.pane-head button {
  width: 10px;
  height: 24px;
  margin-left: 32px;
}
.pane-tabs {
  display: flex;
  gap: 12px;
  padding-left: 5px;
  color: #262626;
}
.pane-tabs .on {
  gap: 8px;
  font-weight: 700;
}
.pane-tabs .other {
  border-left: 1px solid #dadada;
  padding-left: 5px;
}
.pane-icons {
  display: flex;
  gap: 9px;
  padding: 12px 0 0 3px;
}
.pane-icons button {
  width: 30px;
  height: 30px;
}
.pane-icons .picked {
  margin-left: 1px;
  background: #ababab;
}
.rule {
  display: flex;
  height: 15px;
  margin-right: 1px;
  padding: 6px 0 0 90px;
  border-bottom: 1px solid #c0c0c0;
}
.section {
  display: flex;
  align-items: center;
  gap: 7px;
  height: 16px;
  margin: 0 0 10px 8px;
  font-size: 13px;
}
.section svg {
  width: 7px;
}
.section.open {
  margin: 6px 0 12px 8px;
  color: #217346;
}
.section.first {
  margin-top: 16px;
}
.sub {
  margin: 0 0 7px 22px;
}
.modes {
  display: flex;
  flex-direction: column;
}
.opt {
  display: flex;
  align-items: center;
  gap: 5px;
  height: 25px;
  padding-left: 33px;
  white-space: nowrap;
}
.opt input {
  appearance: none;
  display: flex;
  align-items: center;
  justify-content: center;
  width: 13px;
  height: 13px;
  border: 1px solid #ababab;
  background: #fff;
}
.opt input[type='radio'] {
  border-radius: 50%;
}
.opt input[type='radio']:checked::before {
  content: '';
  width: 7px;
  height: 7px;
  border-radius: 50%;
  background: #666;
}
.opt input[type='checkbox']:checked::before {
  content: '';
  width: 5px;
  height: 8px;
  margin-bottom: 2px;
  border: solid #777;
  border-width: 0 2px 2px 0;
  transform: rotate(40deg);
}
.bin-row {
  display: flex;
  align-items: center;
  height: 31px;
}
.num {
  width: 42px;
  height: 23px;
  margin: 4px 18px 0 auto;
  padding-left: 6px;
  border: 1px solid #ababab;
  border-right: 0;
  background: #fff;
  color: #444;
  font-size: 12px;
}
.num:disabled {
  border-color: #dadada;
  background: #eeeeec;
  color: #a0a0a0;
}
.pane-scroll {
  width: 217px;
  margin: auto 0 18px 2px;
}
.pane-scroll .htrack {
  justify-content: flex-start;
}
.pane-scroll .htrack i {
  width: 64%;
  border-width: 1px 1px 1px 0;
}

.status {
  display: flex;
  flex: none;
  align-items: center;
  justify-content: flex-end;
  height: 21px;
  padding-right: 8px;
  border-top: 1px solid #c6c6c6;
  background: #f3f2f1;
}
.status svg {
  fill: none;
  stroke: #444;
}
.view {
  width: 40px;
  height: 20px;
}
.view.on {
  background: #d0d0d0;
}
.zoom-btn {
  width: 18px;
  height: 20px;
}
.zoom {
  appearance: none;
  width: 100px;
  height: 20px;
  background: linear-gradient(#a6a6a6, #a6a6a6) center / 100% 1px no-repeat;
}
.zoom::-webkit-slider-thumb {
  appearance: none;
  width: 5px;
  height: 11px;
  background: #777;
}
.percent {
  width: 40px;
  font-size: 12px;
  text-align: right;
}
.edge {
  flex: none;
  height: 2px;
  background: #111;
}
.edge i {
  display: block;
  width: 18%;
  height: 2px;
  margin-left: 48px;
  border-top: 1px solid #b4b4b4;
  background: #f5f5f5;
}
</style>
